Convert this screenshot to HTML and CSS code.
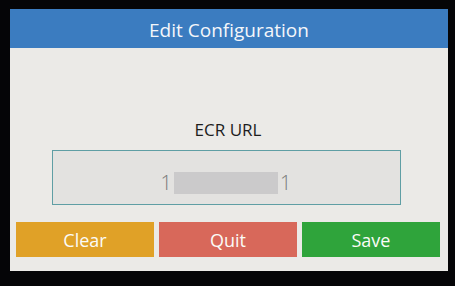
FILE: index.html
```html
<!DOCTYPE html>
<html lang="en">
<head>
    <meta charset="UTF-8">
    <meta name="viewport" content="width=device-width, initial-scale=1.0">
    <title>Edit Configuration</title>
    <link rel="stylesheet" href="styles.css">
</head>
<body>
    <div class="screen">
        <!-- Title bar -->
        <header class="title-bar">Edit Configuration</header>

        <main class="content">
            <label class="field-label" for="ecrUrl">ECR URL</label>
            <div class="field" id="ecrUrl">
                <span>1</span><span class="masked"></span><span>1</span>
            </div>

            <div class="actions">
                <button class="btn clear">Clear</button>
                <button class="btn quit">Quit</button>
                <button class="btn save">Save</button>
            </div>
        </main>
    </div>
</body>
</html>
```

FILE: styles.css
```css
:root {
    --blue: #3b7cc0;
    --panel: #ebeae7;
    --field-bg: #e3e2e0;
    --field-border: #5f9ea4;
    --clear: #e0a127;
    --quit: #d8685a;
    --save: #2fa43b;
}

* {
    margin: 0;
    padding: 0;
    box-sizing: border-box;
    font-family: 'Open Sans', 'DejaVu Sans', sans-serif;
}

body {
    background: #050507;
    width: 455px;
    height: 286px;
    overflow: hidden;
    padding: 9px 7px 0 10px;
}

.screen {
    width: 438px;
    height: 262px;
    background: var(--panel);
    display: flex;
    flex-direction: column;
}

/* Title bar */
.title-bar {
    height: 39px;
    background: var(--blue);
    color: #f4f6fa;
    font-size: 19px;
    display: flex;
    justify-content: center;
    align-items: center;
    padding-top: 2px;
}

.content {
    flex: 1;
    display: flex;
    flex-direction: column;
    align-items: center;
    padding: 71px 8px 0 6px;
}

.field-label {
    font-size: 17px;
    line-height: 21px;
    color: #1d1d1d;
}

.field {
    margin-top: 10px;
    width: 349px;
    height: 55px;
    background: var(--field-bg);
    border: 1px solid var(--field-border);
    display: flex;
    justify-content: center;
    align-items: center;
    color: #7a7a7a;
    font-size: 20px;
    font-weight: 300;
    padding-top: 10px;
    margin-left: -4px;
}

.field .masked {
    width: 104px;
    height: 22px;
    background: #cbcacb;
    margin: 0 2px;
}

.actions {
    margin-top: 17px;
    width: 100%;
    display: flex;
    gap: 5px;
}

.btn {
    flex: 1;
    height: 35px;
    border: none;
    color: #fbfbf7;
    font-size: 18px;
    cursor: pointer;
}

.btn.clear { background: var(--clear); }
.btn.quit  { background: var(--quit); }
.btn.save  { background: var(--save); }
```
